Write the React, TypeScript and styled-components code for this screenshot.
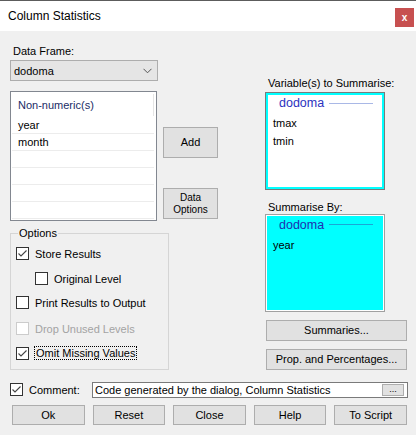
import React from 'react';
import styled, {createGlobalStyle} from 'styled-components';

const GlobalStyle = createGlobalStyle`
    html, body {
        margin: 0;
        padding: 0;
        background: #f0f0f0;
    }
    body {
        font-family: "Liberation Sans", Arial, sans-serif;
        font-size: 10.5px;
        color: #000;
    }
`;

const Window = styled.div`
    width: 416px;
    height: 435px;
    display: flex;
    flex-direction: column;
    overflow: hidden;
    background: #f0f0f0;
`;

const TitleBar = styled.div`
    height: 30px;
    flex: none;
    display: flex;
    justify-content: space-between;
    align-items: center;
    border-top: 1px solid #5c5c5c;
    background: #fff;
    padding: 0 2px 0 8px;
    font-size: 12px;
`;

const CloseButton = styled.div`
    width: 19px;
    height: 19px;
    margin-top: 3px;
    background: #c75050;
    color: #fff;
    font-weight: bold;
    font-size: 10px;
    display: flex;
    align-items: center;
    justify-content: center;
`;

const Body = styled.div`
    display: flex;
    flex-direction: column;
    padding: 0 9px 0 10px;
`;

const TopArea = styled.div`
    height: 339px;
    display: flex;
    justify-content: space-between;
`;

const LeftCol = styled.div`
    width: 208px;
    padding-top: 14px;
    display: flex;
    flex-direction: column;
`;

const RightCol = styled.div`
    width: 142px;
    padding-top: 46px;
    display: flex;
    flex-direction: column;
`;

const Label = styled.div<{$mt?: number}>`
    height: 13px;
    line-height: 13px;
    margin-top: ${(p) => p.$mt ?? 0}px;
    padding-left: 3px;
    white-space: nowrap;
    font-size: 11px;
`;

const Combo = styled.div`
    margin-top: 2px;
    width: 148px;
    height: 21px;
    box-sizing: border-box;
    border: 1px solid #adadad;
    background: #e5e5e5;
    display: flex;
    align-items: center;
    justify-content: space-between;
    padding: 0 5px 0 3px;
    font-size: 11px;
`;

const ListRow = styled.div`
    margin-top: 10px;
    display: flex;
    gap: 6px;
`;

const ListBox = styled.div`
    width: 148px;
    height: 130px;
    box-sizing: border-box;
    border: 1px solid #828790;
    background: #fff;
    display: flex;
    flex-direction: column;
`;

const ListHeader = styled.div`
    height: 25px;
    flex: none;
    display: flex;
    align-items: center;
    justify-content: space-between;
    padding-left: 7px;
    color: #1a2c66;
    font-size: 11px;
`;

const HeaderDivider = styled.div`
    width: 1px;
    height: 22px;
    margin: 2px 2px 0 0;
    align-self: flex-start;
    background: #e5e5e5;
`;

const ListItem = styled.div`
    height: 16px;
    line-height: 16px;
    margin: 0 2px 0 1px;
    padding-left: 6px;
    border-bottom: 1px solid #ececec;
    font-size: 11px;
`;

const SideButtons = styled.div`
    display: flex;
    flex-direction: column;
`;

const Button = styled.div<{$w?: number; $h?: number; $mt?: number; $ml?: number; $small?: boolean}>`
    width: ${(p) => (p.$w ? `${p.$w}px` : 'auto')};
    height: ${(p) => p.$h ?? 21}px;
    margin-top: ${(p) => p.$mt ?? 0}px;
    margin-left: ${(p) => p.$ml ?? 0}px;
    box-sizing: border-box;
    border: 1px solid #adadad;
    background: #e1e1e1;
    display: flex;
    align-items: center;
    justify-content: center;
    text-align: center;
    font-size: ${(p) => (p.$small ? '10px' : '11px')};
    line-height: ${(p) => (p.$small ? '12px' : '13px')};
    white-space: nowrap;
`;

const Group = styled.div`
    position: relative;
    margin-top: 12px;
    width: 159px;
    height: 137px;
    box-sizing: border-box;
    border: 1px solid #d5d5d5;
    padding-left: 5px;
    display: flex;
    flex-direction: column;
`;

const Legend = styled.span`
    position: absolute;
    top: -7px;
    left: 7px;
    padding: 0 1px;
    line-height: 13px;
    background: #f0f0f0;
    font-size: 11px;
`;

const CheckRow = styled.div<{$mt?: number; $indent?: number; $disabled?: boolean}>`
    display: flex;
    align-items: center;
    gap: 6px;
    height: 13px;
    margin-top: ${(p) => p.$mt ?? 0}px;
    margin-left: ${(p) => p.$indent ?? 0}px;
    color: ${(p) => (p.$disabled ? '#a3a3a3' : '#000')};
    white-space: nowrap;
    font-size: 11px;
`;

const Box = styled.span<{$disabled?: boolean}>`
    width: 13px;
    height: 13px;
    flex: none;
    box-sizing: border-box;
    border: 1px solid ${(p) => (p.$disabled ? '#cccccc' : '#333333')};
    background: #fff;
    display: flex;
    align-items: center;
    justify-content: center;
`;

const Focused = styled.span`
    outline: 1px dotted #000;
    outline-offset: 0;
    padding: 0 1px;
    line-height: 13px;
`;

const Receiver = styled.div<{$h: number; $filled?: boolean}>`
    width: 120px;
    height: ${(p) => p.$h}px;
    box-sizing: border-box;
    border: 1px solid ${(p) => (p.$filled ? '#a0a0a0' : '#7a7a7a')};
    background: ${(p) => (p.$filled ? '#00ffff' : '#fff')};
    box-shadow: inset 0 0 0 ${(p) => (p.$filled ? '1px #ffffff' : '2px #00ffff')};
    margin-top: ${(p) => (p.$filled ? 0 : 2)}px;
    display: flex;
    flex-direction: column;
`;

const GroupHead = styled.div<{$line: string; $color: string}>`
    margin-top: 3px;
    height: 14px;
    display: flex;
    align-items: center;
    padding: 0 11px 0 13px;
    color: ${(p) => p.$color};
    font-size: 12.5px;
    &::after {
        content: '';
        flex: 1;
        height: 1px;
        margin-left: 5px;
        background: ${(p) => p.$line};
    }
`;

const ReceiverItems = styled.div`
    padding: 4px 0 0 7px;
    display: flex;
    flex-direction: column;
`;

const ReceiverItem = styled.div`
    height: 18px;
    line-height: 18px;
    font-size: 11px;
`;

const CommentRow = styled.div`
    margin-top: 12px;
    height: 15px;
    display: flex;
    align-items: center;
    font-size: 11px;
`;

const CommentLabel = styled.span`
    margin-left: 6px;
    width: 63px;
`;

const TextBox = styled.div`
    flex: 1;
    height: 16px;
    margin-right: -1px;
    box-sizing: border-box;
    border: 1px solid #7a7a7a;
    background: #fff;
    display: flex;
    align-items: center;
    justify-content: space-between;
    padding: 0 3px 0 2px;
    white-space: nowrap;
`;

const DotsButton = styled.div`
    width: 22px;
    height: 12px;
    box-sizing: border-box;
    border: 1px solid #adadad;
    background: #e1e1e1;
    font-size: 9px;
    line-height: 8px;
    text-align: center;
`;

const ButtonBar = styled.div`
    margin-top: 8px;
    padding-left: 2px;
    display: grid;
    grid-template-columns: repeat(5, 1fr);
    column-gap: 8px;
`;

const CheckMark = () => (
    <svg
        width='11'
        height='11'
        viewBox='0 0 11 11'
    >
        <polyline
            points='1.5,5.5 4,8 9.5,2.5'
            fill='none'
            stroke='#444'
            strokeWidth='1.1'
        />
    </svg>
);

const Chevron = () => (
    <svg
        width='9'
        height='6'
        viewBox='0 0 9 6'
    >
        <polyline
            points='0.5,0.8 4.5,4.8 8.5,0.8'
            fill='none'
            stroke='#555'
            strokeWidth='1'
        />
    </svg>
);

interface CheckProps {
    label: React.ReactNode;
    checked?: boolean;
    disabled?: boolean;
    mt?: number;
    indent?: number;
}

const Check = ({label, checked, disabled, mt, indent}: CheckProps) => (
    <CheckRow
        $mt={mt}
        $indent={indent}
        $disabled={disabled}
    >
        <Box $disabled={disabled}>{checked && <CheckMark/>}</Box>
        <span>{label}</span>
    </CheckRow>
);

const nonNumeric = ['year', 'month', '', '', '', ''];
const footerButtons = ['Ok', 'Reset', 'Close', 'Help', 'To Script'];

export default function App() {
    return (
        <Window>
            <GlobalStyle/>
            <TitleBar>
                <span>{'Column Statistics'}</span>
                <CloseButton>{'x'}</CloseButton>
            </TitleBar>
            <Body>
                <TopArea>
                    <LeftCol>
                        <Label>{'Data Frame:'}</Label>
                        <Combo>
                            <span>{'dodoma'}</span>
                            <Chevron/>
                        </Combo>
                        <ListRow>
                            <ListBox>
                                <ListHeader>
                                    <span>{'Non-numeric(s)'}</span>
                                    <HeaderDivider/>
                                </ListHeader>
                                {nonNumeric.map((item, i) => (
                                    <ListItem key={i}>{item}</ListItem>
                                ))}
                            </ListBox>
                            <SideButtons>
                                <Button
                                    $w={55}
                                    $h={31}
                                    $mt={36}
                                >
                                    {'Add'}
                                </Button>
                                <Button
                                    $w={55}
                                    $h={31}
                                    $mt={30}
                                    $small={true}
                                >
                                    {'Data'}<br/>{'Options'}
                                </Button>
                            </SideButtons>
                        </ListRow>
                        <Group>
                            <Legend>{'Options'}</Legend>
                            <Check
                                label='Store Results'
                                checked={true}
                                mt={13}
                            />
                            <Check
                                label='Original Level'
                                mt={12}
                                indent={19}
                            />
                            <Check
                                label='Print Results to Output'
                                mt={11}
                            />
                            <Check
                                label='Drop Unused Levels'
                                disabled={true}
                                mt={13}
                            />
                            <Check
                                label={<Focused>{'Omit Missing Values'}</Focused>}
                                checked={true}
                                mt={12}
                            />
                        </Group>
                    </LeftCol>
                    <RightCol>
                        <Label>{'Variable(s) to Summarise:'}</Label>
                        <Receiver $h={98}>
                            <GroupHead
                                $color='#2b32c0'
                                $line='#a9b8e6'
                            >
                                {'dodoma'}
                            </GroupHead>
                            <ReceiverItems>
                                <ReceiverItem>{'tmax'}</ReceiverItem>
                                <ReceiverItem>{'tmin'}</ReceiverItem>
                            </ReceiverItems>
                        </Receiver>
                        <Label $mt={11}>{'Summarise By:'}</Label>
                        <Receiver
                            $h={99}
                            $filled={true}
                        >
                            <GroupHead
                                $color='#1f2fb0'
                                $line='#1aa6d6'
                            >
                                {'dodoma'}
                            </GroupHead>
                            <ReceiverItems>
                                <ReceiverItem>{'year'}</ReceiverItem>
                            </ReceiverItems>
                        </Receiver>
                        <Button
                            $w={141}
                            $mt={8}
                            $ml={1}
                        >
                            {'Summaries...'}
                        </Button>
                        <Button
                            $w={141}
                            $mt={8}
                            $ml={1}
                        >
                            {'Prop. and Percentages...'}
                        </Button>
                    </RightCol>
                </TopArea>
                <CommentRow>
                    <Box><CheckMark/></Box>
                    <CommentLabel>{'Comment:'}</CommentLabel>
                    <TextBox>
                        <span>{'Code generated by the dialog, Column Statistics'}</span>
                        <DotsButton>{'...'}</DotsButton>
                    </TextBox>
                </CommentRow>
                <ButtonBar>
                    {footerButtons.map((b) => (
                        <Button
                            key={b}
                            $h={20}
                        >
                            {b}
                        </Button>
                    ))}
                </ButtonBar>
            </Body>
        </Window>
    );
}
